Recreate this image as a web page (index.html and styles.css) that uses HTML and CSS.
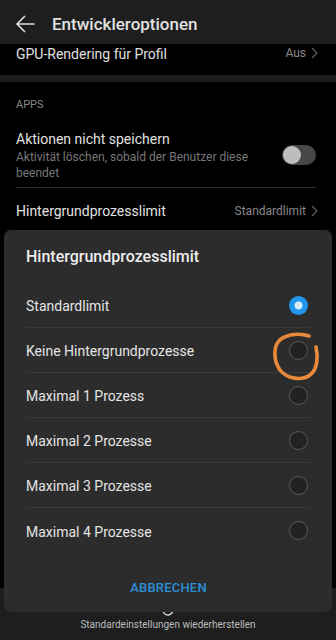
FILE: index.html
```html
<!DOCTYPE html>
<html lang="de">
<head>
<meta charset="utf-8">
<link rel="stylesheet" href="styles.css">
</head>
<body>
<div class="screen">
  <header class="appbar">
    <svg class="back" width="20" height="18" viewBox="0 0 20 18"><path d="M19 9H2M9.5 1.5L2 9l7.5 7.5" fill="none" stroke="#dcdcdc" stroke-width="1.7" stroke-linecap="round" stroke-linejoin="round"/></svg>
    <h1 class="title">Entwickleroptionen</h1>
  </header>
  <main class="list">
    <div class="row row-gpu">
      <span class="label">GPU-Rendering für Profil</span>
      <span class="value">Aus <svg class="chev" width="7" height="12" viewBox="0 0 7 12"><path d="M1 1l5 5-5 5" fill="none" stroke="#5e5e5e" stroke-width="1.2"/></svg></span>
    </div>
    <div class="band"></div>
    <div class="section">APPS</div>
    <div class="row row-two">
      <div class="texts">
        <div class="label">Aktionen nicht speichern</div>
        <div class="sub">Aktivität löschen, sobald der Benutzer diese beendet</div>
      </div>
      <div class="toggle"><div class="knob"></div></div>
    </div>
    <div class="row row-limit">
      <span class="label">Hintergrundprozesslimit</span>
      <span class="value">Standardlimit <svg class="chev" width="7" height="12" viewBox="0 0 7 12"><path d="M1 1l5 5-5 5" fill="none" stroke="#5e5e5e" stroke-width="1.2"/></svg></span>
    </div>
  </main>
  <footer class="bottombar">
    <svg class="restore" width="16" height="16" viewBox="0 0 16 16"><path d="M3 8a5 5 0 1 0 1.5-3.6M4 1.5v3h3" fill="none" stroke="#d0d0d0" stroke-width="1.4"/></svg>
    <span class="restore-text">Standardeinstellungen wiederherstellen</span>
  </footer>

  <div class="dialog">
    <h2 class="dlg-title">Hintergrundprozesslimit</h2>
    <ul class="options">
      <li class="opt"><span>Standardlimit</span><span class="radio on"></span></li>
      <li class="opt"><span>Keine Hintergrundprozesse</span><span class="radio"></span></li>
      <li class="opt"><span>Maximal 1 Prozess</span><span class="radio"></span></li>
      <li class="opt"><span>Maximal 2 Prozesse</span><span class="radio"></span></li>
      <li class="opt"><span>Maximal 3 Prozesse</span><span class="radio"></span></li>
      <li class="opt"><span>Maximal 4 Prozesse</span><span class="radio"></span></li>
    </ul>
    <div class="actions"><button class="btn">ABBRECHEN</button></div>
  </div>

  <svg class="mark" width="336" height="640" viewBox="0 0 336 640"><path d="M309 336C300 333 288 334 281 339C273 345 273 360 280 370C287 379 302 381 310 375C318 369 318 356 316 347" fill="none" stroke="#e8893c" stroke-width="3.6" stroke-linecap="round"/></svg>
</div>
</body>
</html>
```
FILE: styles.css
```css
* { box-sizing: border-box; margin: 0; padding: 0; }
body { margin: 0; background: #000; font-family: Roboto, "Noto Sans", sans-serif; }
.screen { position: relative; width: 336px; height: 640px; display: flex; flex-direction: column; overflow: hidden; background: #000; }
.appbar { height: 44px; background: #1e1e1e; display: flex; align-items: center; padding: 3px 0 0 15px; gap: 17px; }
.back { display: block; }
.title { font-size: 17px; font-weight: 500; color: #e2e2e2; letter-spacing: 0; }
.list { flex: 1; }
.row { display: flex; align-items: center; justify-content: space-between; padding: 0 18px 0 16px; }
.label { font-size: 14px; color: #e0e0e0; }
.value { font-size: 12px; color: #8a8a8a; display: flex; align-items: center; gap: 5px; }
.chev { display: block; }
.row-gpu { height: 31px; align-items: flex-start; padding-top: 2px; }
.band { height: 7px; background: #1b1b1b; }
.section { font-size: 11px; color: #858585; padding: 16px 16px 0; height: 43px; line-height: 14px; }
.row-two { height: 63px; border-bottom: 1px solid #2a2a2a; margin: 0 20px 0 16px; padding: 0; }
.texts { width: 240px; }
.sub { font-size: 12px; color: #777; line-height: 16px; margin-top: 2px; }
.toggle { width: 34px; height: 20px; border-radius: 10px; background: #474747; position: relative; margin-bottom: 3px; }
.knob { position: absolute; left: 1px; top: 1px; width: 18px; height: 18px; border-radius: 50%; background: #bdbdbd; }
.row-limit { height: 44px; padding-top: 1px; }
.bottombar { height: 52px; background: #1e1e1e; display: flex; flex-direction: column; align-items: center; padding-top: 14px; gap: 0; }
.restore { display: block; }
.restore-text { font-size: 10px; color: #bdbdbd; line-height: 14px; }
.dialog { position: absolute; left: 4px; top: 230px; width: 328px; height: 382px; background: #2c2c2c; border-radius: 7px; padding: 0 21px 0 22px; display: flex; flex-direction: column; }
.dlg-title { font-size: 16px; font-weight: 500; color: #ececec; line-height: 22px; margin-top: 16px; margin-bottom: 15px; }
.options { list-style: none; }
.opt { height: 45px; border-bottom: 1px solid #393939; display: flex; align-items: center; justify-content: space-between; font-size: 14px; color: #e4e4e4; padding-top: 2px; }
.opt:last-child { border-bottom: none; }
.radio { width: 19px; height: 19px; border-radius: 50%; border: 1.5px solid #585858; background: #222; margin-right: 3px; margin-top: -2px; }
.radio.on { border: none; background: radial-gradient(circle, #d8ecfb 0 3.5px, #2196ec 4.5px); }
.actions { display: flex; justify-content: center; margin-top: 14px; }
.btn { background: none; border: none; font-family: Roboto, sans-serif; font-size: 13px; font-weight: 500; color: #2a8fd6; height: 40px; letter-spacing: 0.2px; }
.mark { position: absolute; left: 0; top: 0; pointer-events: none; }
```
